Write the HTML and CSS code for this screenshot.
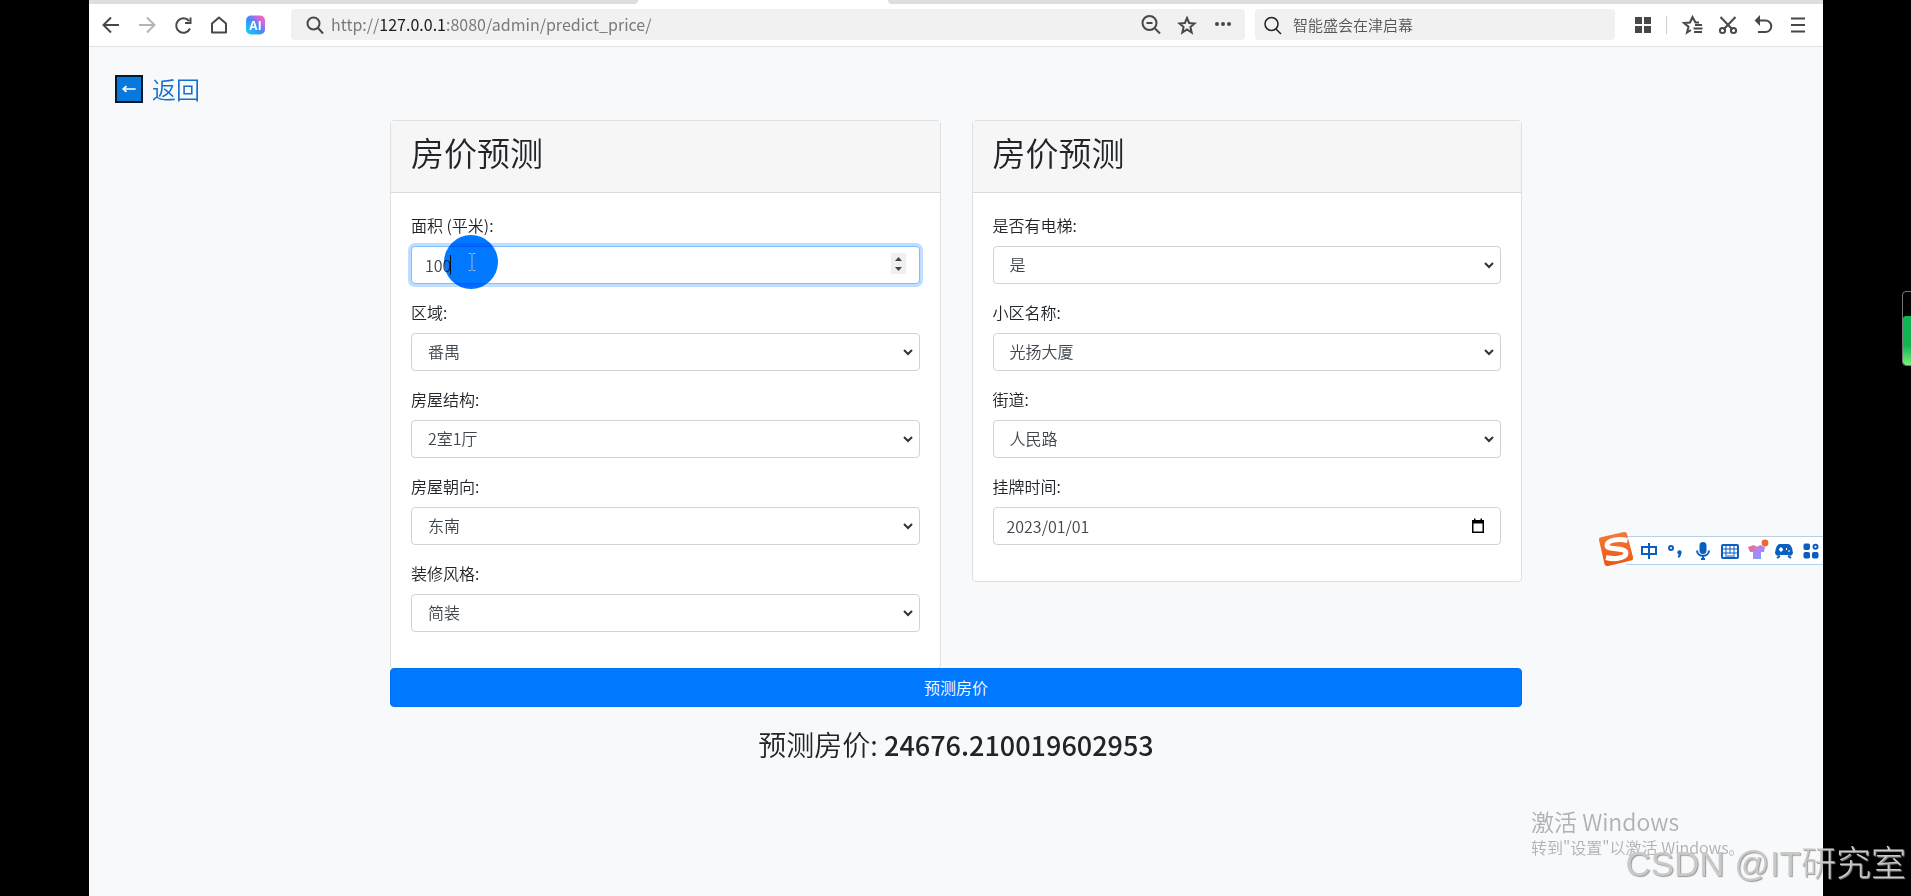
FILE: index.html
```html
<!DOCTYPE html>
<html lang="zh-CN">
<head>
<meta charset="utf-8">
<title>房价预测</title>
<link rel="stylesheet" href="styles.css">
</head>
<body>
<div class="screen">
  <div class="tabstrip"><span class="tab-before"></span><span class="tab-active"></span><span class="tab-after"></span></div>
  <header class="toolbar">
    <nav class="nav-buttons">
      <button class="icon-btn" aria-label="后退"><svg viewBox="0 0 24 24"><path d="M20 12H5M12 4.500L4.500 12l7.500 7.500"/></svg></button>
      <button class="icon-btn faded" aria-label="前进"><svg viewBox="0 0 24 24"><path d="M4 12h15M12 4.500l7.500 7.500-7.500 7.500"/></svg></button>
      <button class="icon-btn" aria-label="刷新"><svg viewBox="0 0 24 24"><path d="M19 15.500A7.200 7.200 0 1 1 18 8"/><path d="M19.500 4.500v5.500h-5.500"/></svg></button>
      <button class="icon-btn" aria-label="主页"><svg viewBox="0 0 24 24"><path d="M5 10.500L12 4.500l7 6V19.500H5z" stroke-linejoin="round"/></svg></button>
      <button class="icon-btn" aria-label="AI"><svg viewBox="0 0 24 24"><defs><linearGradient id="ai" x1="0" y1="1" x2="1" y2="0"><stop offset="0" stop-color="#10d5f5"/><stop offset=".5" stop-color="#3f8cf5"/><stop offset=".8" stop-color="#e362dc"/><stop offset="1" stop-color="#ff5a9c"/></linearGradient></defs><rect x="3" y="2.500" width="19" height="19" rx="5" fill="url(#ai)" stroke="none"/><text x="12.500" y="16.500" class="ai-text">AI</text></svg></button>
    </nav>
    <div class="bar address">
      <span class="icon-btn"><svg viewBox="0 0 24 24"><circle cx="11.500" cy="10.500" r="6"/><path d="M16 15l5 5.500"/></svg></span>
      <div class="url" role="textbox" contenteditable="true" aria-label="地址">http://<b>127.0.0.1</b>:8080/admin/predict_price/</div>
      <button class="icon-btn" aria-label="缩小"><svg viewBox="0 0 24 24"><circle cx="10.500" cy="10" r="7"/><path d="M16 15.500l5 5M7.500 10h6"/></svg></button>
      <button class="icon-btn" aria-label="收藏"><svg viewBox="0 0 24 24"><path d="M12 5l2.100 5 5.400.500-4.100 3.500 1.300 5.500L12 16.500l-4.700 3 1.300-5.500-4.100-3.500 5.400-.500z"/></svg></button>
      <button class="icon-btn" aria-label="更多"><svg viewBox="0 0 24 24"><g class="solid"><circle cx="6" cy="11" r="1"/><circle cx="12" cy="11" r="1"/><circle cx="18" cy="11" r="1"/></g></svg></button>
    </div>
    <div class="bar search">
      <span class="icon-btn dark"><svg viewBox="0 0 24 24"><circle cx="10.500" cy="11" r="6.500"/><path d="M15 16l5 5"/></svg></span>
      <input class="search-input" type="text" aria-label="搜索" placeholder="智能盛会在津启幕">
    </div>
    <div class="tools">
      <button class="icon-btn" aria-label="应用"><svg viewBox="0 0 24 24"><g class="solid"><rect x="5" y="5" width="5" height="5"/><rect x="14" y="5" width="5" height="5"/><rect x="5" y="14" width="5" height="5"/><rect x="14" y="14" width="5" height="5"/></g></svg></button>
      <span class="divider"></span>
      <button class="icon-btn" aria-label="收藏夹"><svg viewBox="0 0 24 24"><path d="M18 9.500h-3.500L11.500 4 9 9.500l-6 .500 4.500 3.700L6 19.500l4-2.500M14 12h7M12.500 15.500h9M13 19h8"/></svg></button>
      <button class="icon-btn" aria-label="截图"><svg viewBox="0 0 24 24"><path d="M4.500 4l12 12.500M19.500 4l-12 12.500"/><circle cx="6.500" cy="17.500" r="2.600"/><circle cx="17.500" cy="17.500" r="2.600"/></svg></button>
      <button class="icon-btn" aria-label="撤销"><svg viewBox="0 0 24 24"><path d="M7 7.500h7.500a5.800 5.800 0 0 1 0 11.600H7"/><path class="solid" d="M8 4.500v6L5 7.500z"/></svg></button>
      <button class="icon-btn" aria-label="菜单"><svg viewBox="0 0 24 24"><path d="M5 5.500h14M5 12h14M5 18.500h14"/></svg></button>
    </div>
  </header>

  <main class="page">
    <a class="back" href="#"><span class="back-icon"><svg viewBox="0 0 24 24"><path d="M20 12H5M9 8.500L5 12l4 3.500"/></svg></span>返回</a>
    <form class="predict">
      <div class="cards">
        <section class="card">
          <div class="card-header"><h2>房价预测</h2></div>
          <div class="card-body">
            <div class="field">
              <label for="area">面积 (平米):</label>
              <div class="control-wrap">
                <input class="control focused" id="area" type="number" value="100">
                <span class="caret"></span>
                <span class="pointer-halo"></span>
                <svg class="pointer" viewBox="0 0 20 20"><path d="M6.500 1.500h2.500l1 1 1-1h2.500M10 2.500v15M6.500 18.500h2.500l1-1 1 1h2.500"/></svg>
              </div>
            </div>
            <div class="field"><label for="region">区域:</label><select class="control" id="region"><option>番禺</option></select></div>
            <div class="field"><label for="layout">房屋结构:</label><select class="control" id="layout"><option>2室1厅</option></select></div>
            <div class="field"><label for="facing">房屋朝向:</label><select class="control" id="facing"><option>东南</option></select></div>
            <div class="field"><label for="decor">装修风格:</label><select class="control" id="decor"><option>简装</option></select></div>
          </div>
        </section>
        <section class="card">
          <div class="card-header"><h2>房价预测</h2></div>
          <div class="card-body">
            <div class="field"><label for="lift">是否有电梯:</label><select class="control" id="lift"><option>是</option></select></div>
            <div class="field"><label for="estate">小区名称:</label><select class="control" id="estate"><option>光扬大厦</option></select></div>
            <div class="field"><label for="street">街道:</label><select class="control" id="street"><option>人民路</option></select></div>
            <div class="field">
              <label for="date">挂牌时间:</label>
              <div class="control-wrap">
                <input class="control" id="date" type="text" value="2023/01/01">
                <button class="calendar" type="button" aria-label="选择日期"><svg viewBox="0 0 16 16"><path d="M2 2h2V.500h1.500V2h5V.500H12V2h2v13H2zM3.500 5.500v8h9v-8z" fill-rule="evenodd"/></svg></button>
              </div>
            </div>
          </div>
        </section>
      </div>
      <button class="submit" type="button">预测房价</button>
      <h3 class="result">预测房价: <strong>24676.210019602953</strong></h3>
    </form>
  </main>

  <div class="ime">
    <svg class="ime-logo" viewBox="0 0 36 36"><defs><linearGradient id="sg" x1="0" y1="0" x2="0" y2="1"><stop offset="0" stop-color="#f57a3c"/><stop offset="1" stop-color="#ee5410"/></linearGradient></defs><path d="M4 6L26 1q2.500-.500 3 2l6 23q.500 3-2 3.500L10 35q-3 .500-3.500-2L1 9q-.500-2.500 3-3z" fill="url(#sg)"/><path d="M29.500 9.500C20 7 9 9.500 9 14.500c0 5 19 1.500 19 7.500 0 5-11 7-20 4.500" fill="none" stroke="#fff" stroke-width="5"/></svg>
    <div class="ime-bar">
      <button aria-label="中文"><svg viewBox="0 0 20 20"><path d="M3 6h14v7H3zM10 2v16"/></svg></button>
      <button aria-label="标点"><svg viewBox="0 0 20 20"><circle cx="5" cy="7" r="2"/><path d="M14 11v2c0 2-.500 2.500-2 3"/><circle cx="13.500" cy="11.500" r="1.200" fill="#0a5fc0"/></svg></button>
      <button aria-label="语音"><svg viewBox="0 0 20 20"><rect x="7.500" y="2" width="5" height="10" rx="2.500" fill="#0a5fc0"/><path d="M4 9.500c0 7 12 7 12 0M10 15v3M8 18h4"/></svg></button>
      <button aria-label="键盘"><svg viewBox="0 0 20 20"><rect x="2" y="4" width="16" height="13" rx="1"/><path class="fine" d="M2 8h16M2 12h16M6 4v12M10 4v9M14 4v12M7 15h6"/></svg></button>
      <button aria-label="皮肤"><svg viewBox="0 0 20 20"><defs><linearGradient id="sh" x1="0" y1="0" x2="1" y2="1"><stop offset="0" stop-color="#ff6464"/><stop offset=".5" stop-color="#b184f8"/><stop offset="1" stop-color="#68a8ff"/></linearGradient></defs><path d="M7 4q3 3 6 0l5 2-1 5h-3v7H6v-7H3L1 6z" fill="url(#sh)" stroke="none"/><circle cx="18" cy="2" r="3.400" fill="#f26430" stroke="none"/></svg></button>
      <button aria-label="游戏"><svg viewBox="0 0 20 20"><path d="M6 4h8q3 0 4 8-1 3-4 1H6q-3 2-4-1 1-8 4-8z" fill="#0a5fc0"/><path d="M3 17l3-2M17 17l-3-2"/><path d="M5 8.500h4M7 6.500v4M12 8h1M14.500 10h1" stroke="#fff"/></svg></button>
      <button aria-label="更多"><svg viewBox="0 0 20 20"><g fill="#0a5fc0" stroke-width="1"><rect x="3" y="3" width="5.500" height="5.500" rx="1"/><circle cx="14.500" cy="5.700" r="2" fill="none" stroke-width="2"/><rect x="3" y="11.500" width="5.500" height="5.500" rx="1"/><rect x="11.500" y="11.500" width="5.500" height="5.500" rx="1"/></g></svg></button>
    </div>
  </div>
  <div class="activate"><p class="activate-title">激活 Windows</p><p>转到"设置"以激活 Windows。</p></div>
</div>
<div class="meter"><span></span></div>
<div class="watermark">CSDN @IT研究室</div>
</body>
</html>
```
FILE: styles.css
```css
* { box-sizing: border-box; }

body {
  margin: 0;
  min-height: 100vh;
  padding: 0 88px 0 89px;
  display: flex;
  position: relative;
  overflow: hidden;
  background: #000;
  color: #212529;
  font: 350 16px/24px "Noto Sans CJK SC", sans-serif;
}

button, input, select { font: inherit; color: inherit; }
button { padding: 0; border: 0; background: none; }
h2, h3, p { margin: 0; font-weight: inherit; }

.screen {
  flex: 1;
  min-width: 0;
  position: relative;
  display: flex;
  flex-direction: column;
  background: #f8f9fb;
}

/* browser chrome */
.tabstrip { display: flex; height: 4px; background: #fff; }
.tab-before { flex: 549; background: #dedede; border-bottom-right-radius: 4px; }
.tab-active { flex: 250; }
.tab-after { flex: 935; background: #dedede; border-bottom-left-radius: 4px; }

.toolbar {
  display: flex;
  align-items: center;
  height: 43px;
  padding: 0 13px 1px 10px;
  background: #fff;
  border-bottom: 1px solid #dfe3e5;
}
.nav-buttons { display: flex; gap: 12px; margin-right: 24px; }
.icon-btn { display: flex; flex: none; width: 24px; height: 24px; }
.icon-btn svg { width: 24px; height: 24px; fill: none; stroke: #484848; stroke-width: 2; }
.icon-btn .solid { fill: #484848; }
.faded svg { stroke: #b4b4b4; }
.dark svg { stroke: #222; stroke-width: 1.5; }
.icon-btn .ai-text { fill: #fff; stroke: none; font: 700 12px "Open Sans", sans-serif; text-anchor: middle; }

.bar { display: flex; align-items: center; height: 31px; border-radius: 4px; background: #f1f1f1; }
.address { flex: 1; min-width: 0; gap: 12px; padding: 0 10px 0 11px; }
.url { flex: 1; min-width: 0; margin-left: -7px; color: #7a7a7a; white-space: nowrap; outline: none; font-weight: 400; line-height: 22px; padding-bottom: 2px; }
.url b { font-weight: inherit; color: #1c1c1c; }
.search { flex: 0 1 360px; min-width: 0; margin-left: 10px; padding: 0 6px; gap: 8px; }
.search-input { flex: 1; min-width: 0; padding: 0; border: 0; outline: none; background: none; font-size: 15px; }
.search-input::placeholder { color: #555; opacity: 1; }
.tools { display: flex; align-items: center; gap: 11px; margin-left: 16px; }
.divider { width: 1px; height: 18px; margin-right: 3px; background: #ccc; }

/* page */
.page { padding: 26px 26px 0; }
.back {
  display: flex;
  width: max-content;
  align-items: center;
  gap: 9px;
  margin-bottom: 15px;
  color: #1470cf;
  font-size: 24px;
  line-height: 32px;
  text-decoration: none;
}
.back-icon { display: flex; width: 28px; height: 28px; padding: 2px; border: 2px solid #06182c; background: #0878dc; }
.back-icon svg { width: 20px; height: 20px; fill: none; stroke: #fff; stroke-width: 2; }

.predict { max-width: 1132px; margin: 0 auto; }
.cards { display: grid; grid-template-columns: 1fr 1fr; gap: 31px; align-items: start; }
.card { border: 1px solid #dfe0e1; border-radius: 4px; background: #fff; }
.card-header { padding: 12px 20px 20px; border-bottom: 1px solid #d9dadb; background: #f6f6f6; }
.card-header h2 { font-size: 33px; line-height: 39px; }
.card-body { padding: 20px; }
.field { margin-bottom: 16px; }
.field label { display: block; margin-bottom: 9px; }
.control-wrap { position: relative; }
.control {
  display: block;
  width: 100%;
  height: 38px;
  padding: 6px 13px;
  border: 1px solid #ced4da;
  border-radius: 4px;
  outline: none;
  background: #fff;
  color: #3f464d;
}
select.control {
  appearance: none;
  padding: 5px 28px 7px 16px;
  background: #fff url("data:image/svg+xml,%3Csvg xmlns='http://www.w3.org/2000/svg' viewBox='0 0 10 8'%3E%3Cpath d='M1 2l4 4 4-4' fill='none' stroke='%23333' stroke-width='2'/%3E%3C/svg%3E") no-repeat right 6px center / 10px 8px;
}
.focused { border-color: #80bdff; box-shadow: 0 0 0 3px #bfdeff; }
.focused::-webkit-inner-spin-button {
  appearance: none;
  opacity: 1;
  width: 15px;
  height: 21px;
  background: #efefef url("data:image/svg+xml,%3Csvg xmlns='http://www.w3.org/2000/svg' viewBox='0 0 15 21'%3E%3Cpath d='M4 8h7L7.500 4zM4 14h7l-3.500 4z' fill='%23444'/%3E%3C/svg%3E") no-repeat center / 15px 21px;
}
.caret { position: absolute; left: 39px; top: 9px; width: 1px; height: 20px; background: #111; }
.pointer-halo {
  position: absolute;
  left: 33px;
  top: -11px;
  width: 54px;
  height: 54px;
  border-radius: 50%;
  background: #0078ff;
  mix-blend-mode: multiply;
}
.pointer { position: absolute; left: 51px; top: 6px; width: 20px; height: 20px; fill: none; stroke: #a3b8cc; stroke-width: 1; }
.calendar { position: absolute; right: 15px; top: 11px; width: 16px; height: 16px; }
.calendar svg { display: block; width: 16px; height: 16px; }
.submit {
  display: block;
  position: relative;
  width: 100%;
  height: 39px;
  margin-top: -1px;
  padding-bottom: 2px;
  border: 1px solid #0072f0;
  border-radius: 4px;
  background: #0078ff;
  color: #fff;
}
.result { margin-top: 19px; font-size: 28px; line-height: 36px; text-align: center; }
.result strong { font-size: 27px; font-weight: 500; }

/* desktop overlays */
.ime { position: absolute; right: 0; top: 531px; display: flex; align-items: center; }
.ime-logo { width: 36px; height: 36px; margin-right: -8px; z-index: 1; }
.ime-bar { display: flex; gap: 7px; height: 29px; align-items: center; padding: 0 2px 0 13px; margin-top: 3px; background: #fff; border: solid #b9cfe4; border-width: 1px 0; }
.ime-bar svg { display: block; width: 20px; height: 20px; overflow: visible; fill: none; stroke: #0a5fc0; stroke-width: 2; }
.ime-bar .fine { stroke-width: 1; }
.activate { position: absolute; right: 82px; bottom: 37px; width: 210px; color: #b0b1b2; font-size: 16px; line-height: 24px; white-space: nowrap; }
.activate-title { font-size: 23px; line-height: 28px; }
.watermark {
  position: absolute;
  right: 5px;
  bottom: 10px;
  color: #c9c9c9;
  font: 300 35px/44px "Liberation Sans", "Noto Sans CJK SC", sans-serif;
  text-shadow: 1px 1px 1px #999;
  white-space: nowrap;
}
.meter { position: absolute; right: -4px; top: 291px; width: 13px; height: 75px; padding-top: 24px; border: 1px solid #777; border-radius: 4px; overflow: hidden; }
.meter span { display: block; height: 100%; border-radius: 3px; background: linear-gradient(#10b455 60%, #7cf07c); }
```
